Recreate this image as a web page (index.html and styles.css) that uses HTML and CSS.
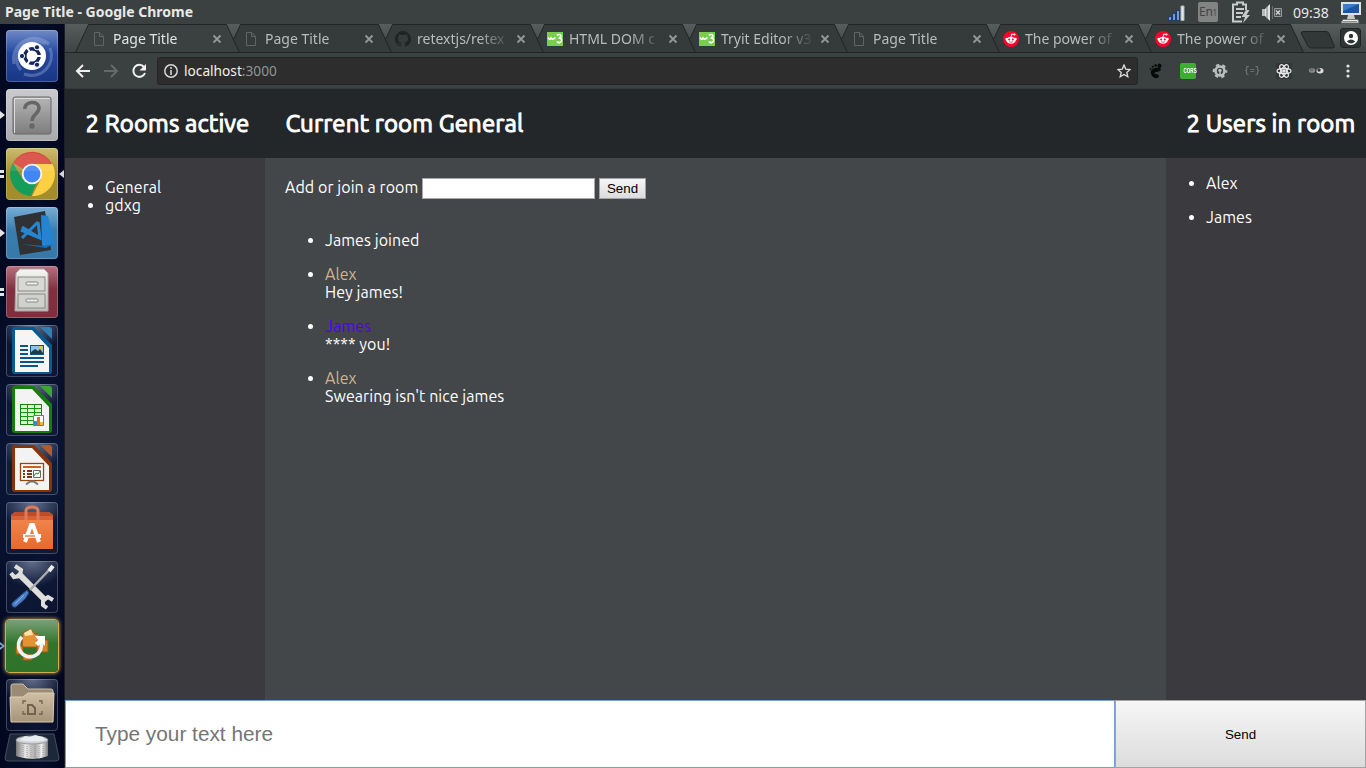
FILE: index.html
```html
<!DOCTYPE html>
<html lang="en">
<head>
<meta charset="utf-8">
<title>Page Title</title>
<link rel="stylesheet" href="styles.css">
</head>
<body>
<svg class="defs" width="0" height="0">
  <defs>
    <linearGradient id="metal" x1="0" y1="0" x2="0" y2="1"><stop offset="0" stop-color="#f5f5f1"/><stop offset="1" stop-color="#bdbdb9"/></linearGradient>
    <linearGradient id="grey" x1="0" y1="0" x2="0" y2="1"><stop offset="0" stop-color="#b5b5b5"/><stop offset="1" stop-color="#7d7d7d"/></linearGradient>
    <linearGradient id="bag" x1="0" y1="0" x2="0" y2="1"><stop offset="0" stop-color="#f28b55"/><stop offset="1" stop-color="#e8692a"/></linearGradient>
    <linearGradient id="folder" x1="0" y1="0" x2="0" y2="1"><stop offset="0" stop-color="#cfbfa5"/><stop offset="1" stop-color="#a69479"/></linearGradient>
    <linearGradient id="tin" x1="0" y1="0" x2="1" y2="0"><stop offset="0" stop-color="#777"/><stop offset=".3" stop-color="#e8e8e8"/><stop offset=".6" stop-color="#aaa"/><stop offset=".8" stop-color="#eee"/><stop offset="1" stop-color="#777"/></linearGradient>
  </defs>
  <symbol id="page" viewBox="0 0 12 14"><path d="M1.5.5h5.200l3.800 3.900v9.100h-9zM6.500.5v4h4" fill="none" stroke="#626464"/></symbol>
  <symbol id="x" viewBox="0 0 10 10"><path d="M1.500 1.500l7 7M8.500 1.500l-7 7" stroke="#969898" stroke-width="1.800"/></symbol>
  <symbol id="w3" viewBox="0 0 16 14"><path d="M0 0h16v14H0z" fill="#77ce4f"/><path d="M1 5.500q1.500 3 3 .5 1.500 2.500 4.500-.5M10 3.500c1-1.500 4-1.200 4 .6 0 1.400-1.500 1.900-2.500 1.900 2.500 0 3.300 1.200 3 2.900-.4 2-3.500 2.300-4.500.6" fill="none" stroke="#fff" stroke-width="1.600"/></symbol>
  <symbol id="reddit" viewBox="0 0 16 16"><circle cx="8" cy="8" r="8" fill="#f9052b"/><ellipse cx="8" cy="9.200" rx="4.700" ry="3.500" fill="#fff"/><circle cx="3.500" cy="8" r="1.200" fill="#fff"/><circle cx="12.500" cy="8" r="1.200" fill="#fff"/><path d="M8 6l.7-3 2.600.6" fill="none" stroke="#fff"/><circle cx="11.500" cy="3.600" r="1" fill="#fff"/><circle cx="6.200" cy="8.600" r="1" fill="#f9052b"/><circle cx="9.800" cy="8.600" r="1" fill="#f9052b"/><path d="M6 10.700q2 1.200 4 0" stroke="#f9052b" stroke-width=".7" fill="none"/></symbol>
  <symbol id="tabshape" viewBox="0 0 166 29"><path d="M.5 28.500h1L14.500.5h138l13 28z"/></symbol>
</svg>

<header class="panel">
  <span class="window-title">Page Title - Google Chrome</span>
  <div class="indicators">
    <svg class="i-signal" width="17" height="16"><path d="M.5 11.500h3v4h-3zM4.500 8.500h3v7h-3zM8.500 5.500h3v10h-3z" fill="#6d9ada" stroke="#182f5c" stroke-width=".8"/><path d="M13 1h3v14.500h-3z" fill="#e6eaee" stroke="#a8b0b4"/></svg>
    <span class="lang">En<small>1</small></span>
    <svg class="i-batt" width="20" height="23" fill="none"><path d="M15 9V3.500H12V1.500H6v2H2v17h9" stroke="#c9caca" stroke-width="2"/><path d="M5 8h8M5 12h7M5 16h5" stroke="#c9caca" stroke-width="2"/><path d="M15 9l-4.500 7h3.500l-2 6 7-8h-3.500l3-5z" fill="#c9caca"/></svg>
    <svg class="i-sound" width="21" height="18"><path d="M0 6h3v7H0z" fill="#b9bbbb"/><path d="M3 6l5-5v17l-5-5z" fill="#e0e1e1"/><path d="M5 3v13" stroke="#777"/><path d="M10.500 3v13" stroke="#686c6c"/><path d="M12.500 5.500h7v8h-7z" fill="#4c5050" stroke="#969999"/><path d="M14 7.500l4 4m0-4l-4 4" stroke="#d4d5d5" stroke-width="1.300"/></svg>
    <span class="clock">09:38</span>
    <svg class="i-pc" width="22" height="23"><path d="M2 2h18v11H2z" fill="#1d54a6" stroke="#e2e2dd" stroke-width="2"/><path d="M3 3h16L3 10z" fill="#3f79c7"/><path d="M8 14h6l1 4H7z" fill="#c9cac6"/><path d="M3 18.500h15l1 3.500H1z" fill="#ecece8" stroke="#747775"/><path d="M3 20.500h14" stroke="#8b8e8c"/></svg>
  </div>
</header>

<div class="desktop">
<nav class="launcher">
  <div class="tile ubuntu"><svg viewBox="0 0 52 52"><path d="M8 34C4 14 26 0 43 14M15 40C2 26 20 2 40 14M44 18c6 16-8 32-26 26" fill="none" stroke="#c0cdf0" stroke-opacity=".3" stroke-width="3"/><circle cx="26" cy="26" r="14" fill="#fff"/><circle cx="26" cy="26" r="7.200" fill="none" stroke="#14265e" stroke-width="3.400"/><path d="M26 26H36M26 26l-5-9M26 26l-5 9" stroke="#fff" stroke-width="2"/><circle cx="26" cy="26" r="5" fill="#fff"/><g fill="#14265e" stroke="#fff"><circle cx="16" cy="26" r="2.600"/><circle cx="31" cy="17.300" r="2.600"/><circle cx="31" cy="34.700" r="2.600"/></g></svg></div>
  <div class="tile unknown"><svg viewBox="0 0 52 52"><rect x="7" y="8" width="38" height="37" rx="2" fill="url(#grey)" stroke="#666"/><path d="M8.500 44V9.500H44" fill="none" stroke="#ddd"/><path d="M19 20c-1-8 14-9 14-1 0 6-7 6-7 13" fill="none" stroke="#666" stroke-width="3.500"/><circle cx="26" cy="37" r="2.700" fill="#666"/></svg><i class="run one"></i></div>
  <div class="tile chrome"><svg viewBox="0 0 52 52"><path d="M26 26L7 15A22 22 0 0 1 46 16H26z" fill="#d8473d"/><path d="M26 16h20.500A22 22 0 0 1 26 48l9-17z" fill="#fdcf43"/><path d="M7 15l10 17 13 4-5 12A22 22 0 0 1 7 15z" fill="#159e59"/><circle cx="26" cy="26" r="10.300" fill="#f3f3f3"/><circle cx="26" cy="26" r="8.400" fill="#4285f4"/><path d="M4 23C10-1 42-1 48 23z" fill="#fff" opacity=".1"/></svg><i class="run two"></i><i class="focus"></i></div>
  <div class="tile code"><svg viewBox="0 0 52 52"><path d="M8 10l31-6 6 39-31 5z" fill="#303135"/><path d="M35 8l7 1 6 28-9 4-3-3z" fill="#2384d4"/><path d="M15 37l23 2 9-2-7 4z" fill="#126db6"/><path d="M32 15l2 16-19-8M32 15L16 31M34 31L16 20" fill="none" stroke="#2786cf" stroke-width="3"/></svg><i class="run one"></i></div>
  <div class="tile cabinet"><svg viewBox="0 0 52 52"><path d="M10 7l4-4h24l4 4v38H9z" fill="url(#metal)" stroke="#aaa"/><rect x="12" y="11" width="27" height="14" fill="#d8d8d5" stroke="#888"/><rect x="12" y="28" width="27" height="14" fill="#d0d0cc" stroke="#888"/><rect x="20" y="16" width="12" height="3" rx="1" fill="#eee" stroke="#888"/><rect x="20" y="33" width="12" height="3" rx="1" fill="#eee" stroke="#888"/></svg><i class="run two"></i></div>
  <div class="tile glass"><svg viewBox="0 0 52 52"><path d="M9 2h19l18 18v26q0 3-3 3H9q-3 0-3-3V5q0-3 3-3z" fill="#085b91"/><path d="M9 5h17l17 18v24H9z" fill="#f5f5f5"/><path d="M34 2h9q3 0 3 3v9z" fill="#2f80b2"/><path d="M14 21h8M14 25h8M14 29h8M14 33h24M14 37h24M14 41h18" stroke="#0c5588" stroke-width="2"/><rect x="24.500" y="20.500" width="13" height="9" fill="#8ac5e4" stroke="#0c5588"/><path d="M25 29v-2l4-3 3 2 2-2 3 4v1z" fill="#243846"/><circle cx="35" cy="22.500" r="1.500" fill="#f4c430"/></svg></div>
  <div class="tile glass"><svg viewBox="0 0 52 52"><path d="M9 2h19l18 18v26q0 3-3 3H9q-3 0-3-3V5q0-3 3-3z" fill="#187c0c"/><path d="M9 5h17l17 18v24H9z" fill="#f3f3f3"/><path d="M34 2h9q3 0 3 3v9z" fill="#39a536"/><rect x="14.500" y="20.500" width="21" height="20" fill="#dcfacb" stroke="#138009"/><path d="M14 24.500h22M14 28.500h22M14 32.500h22M14 36.500h22M21.500 20v21M28.500 20v21" stroke="#169610"/><path d="M27.500 31.500h10v10h-10z" fill="#fff" stroke="#777"/><path d="M28 37h3v4h-3z" fill="#318bd0"/><path d="M31 33h3v8h-3z" fill="#e66b26"/><path d="M34 38h3v3h-3z" fill="#ecb92c"/></svg></div>
  <div class="tile glass"><svg viewBox="0 0 52 52"><path d="M9 2h19l18 18v26q0 3-3 3H9q-3 0-3-3V5q0-3 3-3z" fill="#873508"/><path d="M9 5h17l17 18v24H9z" fill="#f3f3f3"/><path d="M34 2h9q3 0 3 3v9z" fill="#b45b2d"/><rect x="14.500" y="20.500" width="23" height="17" fill="#fff" stroke="#9b430c" stroke-width="1.300"/><path d="M17 24h18" stroke="#d0601f" stroke-width="2"/><path d="M17 28h2m2 0h5M17 31h2m2 0h5M17 34h2m2 0h5" stroke="#873508" stroke-width="1.800"/><path d="M27.500 27.500h7v7h-7z" fill="#fff" stroke="#666"/><path d="M28 33l2-3 2 1 2-3" fill="none" stroke="#24962b"/><path d="M20 41.500l4-3h4l4 3" fill="none" stroke="#777" stroke-width="2"/></svg></div>
  <div class="tile glass"><svg viewBox="0 0 52 52"><path d="M5 13l4-3h34l4 3v34H5z" fill="url(#bag)"/><path d="M5 13l4-3h34l4 3v1H5z" fill="#bd4c2b"/><path d="M5 14h42v4H5z" fill="#d96136"/><path d="M20 18V9q0-4 6-4t6 4v9" fill="none" stroke="#e07a58" stroke-width="3"/><path d="M19 40l6-17h2l6 17" fill="none" stroke="#fff" stroke-width="4"/><path d="M17 34h18" stroke="#fff" stroke-width="4"/><path d="M19 34h10" stroke="#e96b2e" stroke-width="1.300"/></svg></div>
  <div class="tile glass"><svg viewBox="0 0 52 52"><path d="M12 12l28 28" stroke="#dededb" stroke-width="6"/><g fill="none" stroke="#dededb" stroke-width="4"><path d="M9 5l6 4-1 6-6 1-3-4"/><path d="M47 39l-5-3-5 3v5l4 3"/></g><path d="M45 7L24 29" stroke="#aaa" stroke-width="2.500"/><path d="M47 5l-4 5" stroke="#eee" stroke-width="4"/><path d="M21 29l-6 5-9 8q-1 5 4 4l9-8 4-6z" fill="#4c7fc4" stroke="#1b427b"/><path d="M18 34L9 43" stroke="#87b0e8"/></svg></div>
  <div class="tile updater"><svg viewBox="0 0 52 52"><path d="M17 13l8-4 4 5 4 1v12H16z" fill="#e39331" stroke="#a75a12"/><path d="M18 13l7-4 2 6-8 1z" fill="#ffe0a6"/><path d="M10 26h7v8h-7zM31 20h11v12H31zM17 34h9v6h-9z" fill="#d78325" stroke="#9b5719"/><path d="M16 17A11.500 11.500 0 1 0 35 22" fill="none" stroke="#f2f2f2" stroke-width="3.600"/><path d="M29 16h10v10l-3-3-4 3-3-3 3-3z" fill="#fff"/></svg><i class="run hollow"></i></div>
  <div class="tile glass"><svg viewBox="0 0 52 52"><path d="M5 7q0-2 2-2h10l5 5h23q2 0 2 2v16H5z" fill="#9b8b74" stroke="#ccbea7"/><path d="M4 18h13l5-4h26l-1 29H5z" fill="url(#folder)" stroke="#dacdb6"/><path d="M22 26h4l3 3v6h-7z" fill="none" stroke="#72634e" stroke-width="2"/><path d="M17 25v-3h3m13 0h3v3M17 32v3h3m13 0h3v-3" fill="none" stroke="#72634e" stroke-width="1.300"/></svg></div>
  <svg class="trash" width="56" height="29" viewBox="0 0 56 29"><path d="M6 1h44l5 24q0 3-3 3H4q-3 0-3-3z" fill="#1d273a" stroke="#454d5c"/><path d="M12 7h32v16q-15 6-32 0z" fill="url(#tin)"/><path d="M15 11v13m4-12v13m4-12v13m4-13v13m4-13v13m4-13v13m4-13v11" stroke="#999" stroke-dasharray="1 1"/><ellipse cx="28" cy="7" rx="16" ry="4" fill="#cfd3d6" stroke="#999"/><path d="M16 7l5-4 5 1 5-2 8 2 3 3q-13 3-26 0z" fill="#e7edf0"/></svg>
</nav>

<section class="browser">
  <div class="tabstrip">
    <div class="tabs">
      <div class="tab active"><svg class="shape"><use href="#tabshape"/></svg><svg class="fav doc"><use href="#page"/></svg><span>Page Title</span><svg class="close"><use href="#x"/></svg></div>
      <div class="tab"><svg class="shape"><use href="#tabshape"/></svg><svg class="fav doc"><use href="#page"/></svg><span>Page Title</span><svg class="close"><use href="#x"/></svg></div>
      <div class="tab"><svg class="shape"><use href="#tabshape"/></svg><svg class="fav" viewBox="0 0 16 16"><path d="M8 0a8 8 0 0 0-2.500 15.600c.4.100.5-.2.500-.4v-1.500c-2.200.5-2.700-1-2.700-1-.4-.9-.9-1.200-.9-1.200-.7-.5.100-.5.100-.5.800.1 1.200.8 1.200.8.700 1.200 1.900.9 2.300.7.100-.5.300-.9.500-1.100-1.800-.2-3.600-.9-3.600-4 0-.9.300-1.600.8-2.100-.1-.2-.4-1 .1-2.100 0 0 .7-.2 2.200.8a7.500 7.500 0 0 1 4 0c1.500-1 2.200-.8 2.200-.8.400 1.100.2 1.900.1 2.100.5.600.8 1.300.8 2.100 0 3.100-1.900 3.800-3.700 4 .3.300.6.800.6 1.500v2.300c0 .2.100.5.500.4A8 8 0 0 0 8 0z" fill="#202323"/></svg><span>retextjs/retex</span><svg class="close"><use href="#x"/></svg></div>
      <div class="tab"><svg class="shape"><use href="#tabshape"/></svg><svg class="fav w3"><use href="#w3"/></svg><span>HTML DOM c</span><svg class="close"><use href="#x"/></svg></div>
      <div class="tab"><svg class="shape"><use href="#tabshape"/></svg><svg class="fav w3"><use href="#w3"/></svg><span>Tryit Editor v3</span><svg class="close"><use href="#x"/></svg></div>
      <div class="tab"><svg class="shape"><use href="#tabshape"/></svg><svg class="fav doc"><use href="#page"/></svg><span>Page Title</span><svg class="close"><use href="#x"/></svg></div>
      <div class="tab"><svg class="shape"><use href="#tabshape"/></svg><svg class="fav"><use href="#reddit"/></svg><span>The power of</span><svg class="close"><use href="#x"/></svg></div>
      <div class="tab"><svg class="shape"><use href="#tabshape"/></svg><svg class="fav"><use href="#reddit"/></svg><span>The power of</span><svg class="close"><use href="#x"/></svg></div>
    </div>
    <svg class="newtab" width="36" height="18"><path d="M3 .5h23q2 0 3 2l5 12q1 2.500-1 2.500H11q-2 0-3-2L1.500 3Q.500.5 3 .5z" fill="#323737" stroke="#202424"/></svg>
    <div class="profile"><svg width="14" height="14"><circle cx="7" cy="7" r="7" fill="#fff"/><circle cx="7" cy="5" r="2.200" fill="#303535"/><path d="M2.800 10.500q4.200-4.200 8.400 0Q7 14.500 2.800 10.500z" fill="#303535"/></svg></div>
  </div>
  <div class="toolbar">
    <svg class="nav-icons" width="92" height="20" fill="none" stroke-width="2"><path d="M25 10H12m6-6l-6 6 6 6" stroke="#f0f0f0"/><path d="M39 10h13m-6-6l6 6-6 6" stroke="#646a69"/><path d="M79 6a6 6 0 1 0 1 6" stroke="#f0f0f0"/><path d="M81 3v6.500h-6.500z" fill="#f0f0f0"/></svg>
    <div class="omnibox">
      <svg width="14" height="14"><circle cx="7" cy="7" r="6.200" fill="none" stroke="#d7d7d7" stroke-width="1.500"/><path d="M7 6v5M7 3v2" stroke="#d7d7d7" stroke-width="1.600"/></svg>
      <span class="url">localhost<em>:3000</em></span>
      <svg class="star" width="14" height="14"><path d="M7 1l1.700 4.100 4.400.4-3.300 2.900 1 4.300L7 10.400l-3.800 2.300 1-4.300L.900 5.500l4.400-.4z" fill="none" stroke="#e0e0e0" stroke-width="1.300"/></svg>
    </div>
    <div class="extensions">
      <svg width="16" height="16"><path d="M13 6C12 4 4 4 3 8s3 8 6 7c4-1 1-4-1-4s-2-2 0-2 5-1 5-3z" fill="#080a0a"/><ellipse cx="11.500" cy="2.700" rx="2" ry="2.300" fill="#080a0a"/><circle cx="7.700" cy="2.500" r="1.300" fill="#080a0a"/><circle cx="4.800" cy="3.800" r="1.100" fill="#080a0a"/><circle cx="2.500" cy="5.800" r=".9" fill="#080a0a"/></svg>
      <span class="cors"><b>CORS</b></span>
      <svg width="16" height="16"><circle cx="8" cy="8" r="4.500" fill="none" stroke="#bdbfbf" stroke-width="2.600"/><circle cx="8" cy="8" r="6.300" fill="none" stroke="#bdbfbf" stroke-width="2" stroke-dasharray="3.300 3.298" stroke-dashoffset="1.600"/><circle cx="8" cy="7.500" r="1.700" fill="#bdbfbf"/><path d="M8 8v4" stroke="#bdbfbf" stroke-width="1.500"/></svg>
      <span class="braces">{=}</span>
      <svg class="react" width="16" height="16" fill="none" stroke="#e7e7e7" stroke-width="1.200"><ellipse cx="8" cy="8" rx="7" ry="2.700"/><ellipse cx="8" cy="8" rx="7" ry="2.700" transform="rotate(60 8 8)"/><ellipse cx="8" cy="8" rx="7" ry="2.700" transform="rotate(120 8 8)"/><circle cx="8" cy="8" r="1.200" fill="#e7e7e7"/></svg>
      <svg width="16" height="16"><ellipse cx="4" cy="7.500" rx="3.200" ry="2.300" fill="#858888"/><ellipse cx="12" cy="7.700" rx="3.500" ry="2.700" fill="#ddd"/><circle cx="11" cy="7" r="1.700" fill="#343838"/><path d="M2 7h3" stroke="#555"/></svg>
      <svg width="16" height="16" fill="#e3e3e3"><circle cx="8" cy="3" r="1.600"/><circle cx="8" cy="8" r="1.600"/><circle cx="8" cy="13" r="1.600"/></svg>
    </div>
  </div>

  <main class="app">
    <header class="headings"><h2 class="rooms-h">2 Rooms active</h2><h2 class="current-h">Current room General</h2><h2 class="users-h">2 Users in room</h2></header>
    <div class="columns">
      <aside class="rooms"><ul><li>General</li><li>gdxg</li></ul></aside>
      <section class="chat">
        <form class="join"><label for="room">Add or join a room</label><input id="room" type="text"><button type="button">Send</button></form>
        <ul class="messages">
          <li>James joined</li>
          <li><b class="alex">Alex</b>Hey james!</li>
          <li><b class="james">James</b>**** you!</li>
          <li><b class="alex">Alex</b>Swearing isn't nice james</li>
        </ul>
      </section>
      <aside class="users"><ul><li>Alex</li><li>James</li></ul></aside>
    </div>
    <form class="composer"><input type="text" placeholder="Type your text here"><button type="button">Send</button></form>
  </main>
</section>
</div>
</body>
</html>
```
FILE: styles.css
```css
* { box-sizing: border-box; }
body { margin: 0; width: 1366px; height: 768px; overflow: hidden; display: flex; flex-direction: column; background: #3b4140; font-family: "Noto Sans", sans-serif; }
.defs { position: absolute; }
svg { flex: none; display: block; }

.panel { height: 24px; flex: none; display: flex; align-items: center; justify-content: space-between; padding: 0 4px 0 5px; background: #3b4140; color: #e8e8e6; }
.window-title { font-size: 14px; font-weight: 700; line-height: 24px; }
.indicators { display: flex; align-items: center; height: 24px; }
.i-signal { margin-right: 13px; margin-top: 2px; }
.lang { width: 20px; height: 20px; background: #828383; color: #414646; font-size: 12px; line-height: 20px; text-align: center; border-radius: 2px; margin-right: 13px; letter-spacing: -.3px; }
.lang small { font-size: 8px; }
.i-batt { margin-right: 11px; }
.i-sound { margin-right: 10px; }
.clock { width: 37px; font-size: 14px; margin-right: 10px; white-space: nowrap; }

.desktop { flex: 1; display: flex; min-height: 0; }
.launcher { width: 65px; flex: none; padding: 6px 0 0 6px; display: flex; flex-direction: column; gap: 7px; background: radial-gradient(circle at 30px 450px, #0b1736, transparent 200px), linear-gradient(90deg, #020820, #040d2a 60%, #02071e); border-right: 1px solid #1c2026; }
.tile { position: relative; width: 52px; height: 52px; flex: none; border-radius: 4px; box-shadow: inset 0 0 0 1px rgba(255,255,255,.22); }
.tile > svg { width: 52px; height: 52px; }
.ubuntu { background: linear-gradient(#6f8bc7, #2448a0 45%, #1a3684); }
.unknown { background: linear-gradient(#cbcbcd, #a9a9ac); }
.chrome { background: linear-gradient(#cdbb72, #a58e2c 50%, #a38c2b); }
.code { background: linear-gradient(#79aed5, #397dae 45%, #3678a8); }
.cabinet { background: linear-gradient(#b6727f, #81303f 45%, #7f2e3e); }
.glass { background: radial-gradient(ellipse 34px 26px at 50% 0, rgba(190,205,230,.5), rgba(90,110,145,.16) 90%, rgba(70,85,115,.1)); }
.updater { background: linear-gradient(#7aa177, #31752d 45%, #2e7328); box-shadow: 0 0 0 1px #d3a952, 0 0 4px 1px #e0b050; }
.run { position: absolute; left: -6px; top: 22px; width: 5px; height: 8px; background: #e4e4e6; clip-path: polygon(0 0, 100% 50%, 0 100%); }
.run.two { width: 4px; background: linear-gradient(#e4e4e6 3px, transparent 3px 5px, #e4e4e6 5px); clip-path: none; }
.run.hollow { background: #7ba5cf; clip-path: polygon(0 0, 100% 50%, 0 100%, 0 70%, 50% 50%, 0 30%); }
.focus { position: absolute; right: -6px; top: 22px; width: 5px; height: 8px; background: #d5d5d8; clip-path: polygon(100% 0, 0 50%, 100% 100%); }
.trash { margin: -5px 0 0 -2px; }

.browser { flex: 1; display: flex; flex-direction: column; min-width: 0; }
.tabstrip { height: 29px; flex: none; padding-left: 9px; display: flex; background: linear-gradient(#565d5c, #3e4443 28px, #232727 28px); }
.tabs { display: flex; isolation: isolate; margin-right: -15px; }
.tab { position: relative; width: 166px; height: 29px; margin-right: -14px; padding: 0 15px 0 17px; display: flex; align-items: center; color: #b8bcba; z-index: 3; }
.tab:nth-child(1) { z-index: 9; } .tab:nth-child(2) { z-index: 8; } .tab:nth-child(3) { z-index: 7; } .tab:nth-child(4) { z-index: 6; } .tab:nth-child(5) { z-index: 5; } .tab:nth-child(6) { z-index: 4; } .tab:nth-child(8) { z-index: 2; }
.shape { position: absolute; left: 0; top: 0; width: 166px; height: 29px; fill: #353a3a; stroke: #202424; z-index: -1; }
.tab.active { color: #e2e4e3; }
.active .shape { fill: #3b4140; }
.fav { width: 16px; height: 16px; margin-right: 6px; }
.fav.doc, .fav.w3 { height: 14px; }
.tab span { width: 95px; font-size: 14px; line-height: 28px; white-space: nowrap; -webkit-mask-image: linear-gradient(90deg, #000 62px, transparent 94px); }
.tab .close { width: 10px; height: 10px; margin-left: 4px; margin-top: 1px; }
.newtab { margin: 7px 0 0 25px; }
.profile { width: 21px; height: 20px; margin: 4px 0 0 4px; display: grid; place-items: center; background: #2e3333; border: 1px solid #202424; border-radius: 3px; }
.toolbar { height: 36px; flex: none; display: flex; align-items: center; background: #3b4140; border-bottom: 1px solid #343a39; }
.omnibox { width: 981px; height: 28px; border: 1px solid #232626; border-radius: 3px; background: #2d2d2d; display: flex; align-items: center; padding: 0 6px; }
.url { font-size: 13.700px; color: #f0f0f0; margin-left: 6px; flex: 1; line-height: 26px; }
.url em { font-style: normal; color: #929292; }
.extensions { display: flex; align-items: center; gap: 16px; margin-left: 10px; }
.cors { width: 16px; height: 16px; background: #3cae31; border-radius: 2px; color: #fff; display: grid; place-items: center; }
.cors b { font: bold 7px/16px "Liberation Sans", sans-serif; transform: scaleX(.66); }
.braces { width: 16px; font: 9px/16px "Liberation Mono", monospace; color: #878b8a; text-align: center; }
.react { background: #303535; }

.app { flex: 1; display: flex; flex-direction: column; min-height: 0; color: #fff; font-family: Ubuntu, "Noto Sans", sans-serif; font-size: 16px; letter-spacing: .06px; }
.headings { height: 69px; flex: none; display: flex; background: #232729; }
.headings h2 { margin: 0; padding-left: 20.500px; font-size: 24px; line-height: 69px; font-weight: 400; -webkit-text-stroke: 1px #fff; letter-spacing: .12px; white-space: nowrap; }
.rooms-h { width: 200px; }
.current-h { width: 901px; }
.columns { flex: 1; display: flex; min-height: 0; }
.rooms, .users { width: 200px; flex: none; background: #3a3a3f; }
.app ul { margin: 0; padding-left: 40px; line-height: 18px; }
.rooms { padding-top: 20px; }
.users li { margin: 16px 0; }
.chat { flex: 1; background: #444749; padding: 20px; }
.join { height: 21px; display: flex; align-items: center; gap: 4px; }
.join label { width: 133px; line-height: 18px; margin-top: -3px; white-space: nowrap; }
.join input { width: 173px; height: 21px; border: 1px solid #a9a9a9; padding: 0; background: #fff; }
.join button { width: 47px; height: 21px; padding: 0; }
button { border: 1px solid #a3a3a3; border-radius: 0; background: linear-gradient(#f6f6f6, #dcdcdc); color: #000; font: 13.333px "Liberation Sans", sans-serif; }
.app .messages { margin-top: 32px; }
.messages li { margin-bottom: 16px; }
.messages b { display: block; font-weight: 400; }
.alex { color: #d2b48c; }
.james { color: #5000f5; }
.composer { height: 68px; flex: none; display: flex; }
.composer input { width: 1050px; border: 1px solid #7e9cc8; padding: 0 29px; background: #fff; font: 20.800px "Liberation Sans", sans-serif; }
.composer input::placeholder { color: #757575; }
.composer button { flex: 1; }
```
